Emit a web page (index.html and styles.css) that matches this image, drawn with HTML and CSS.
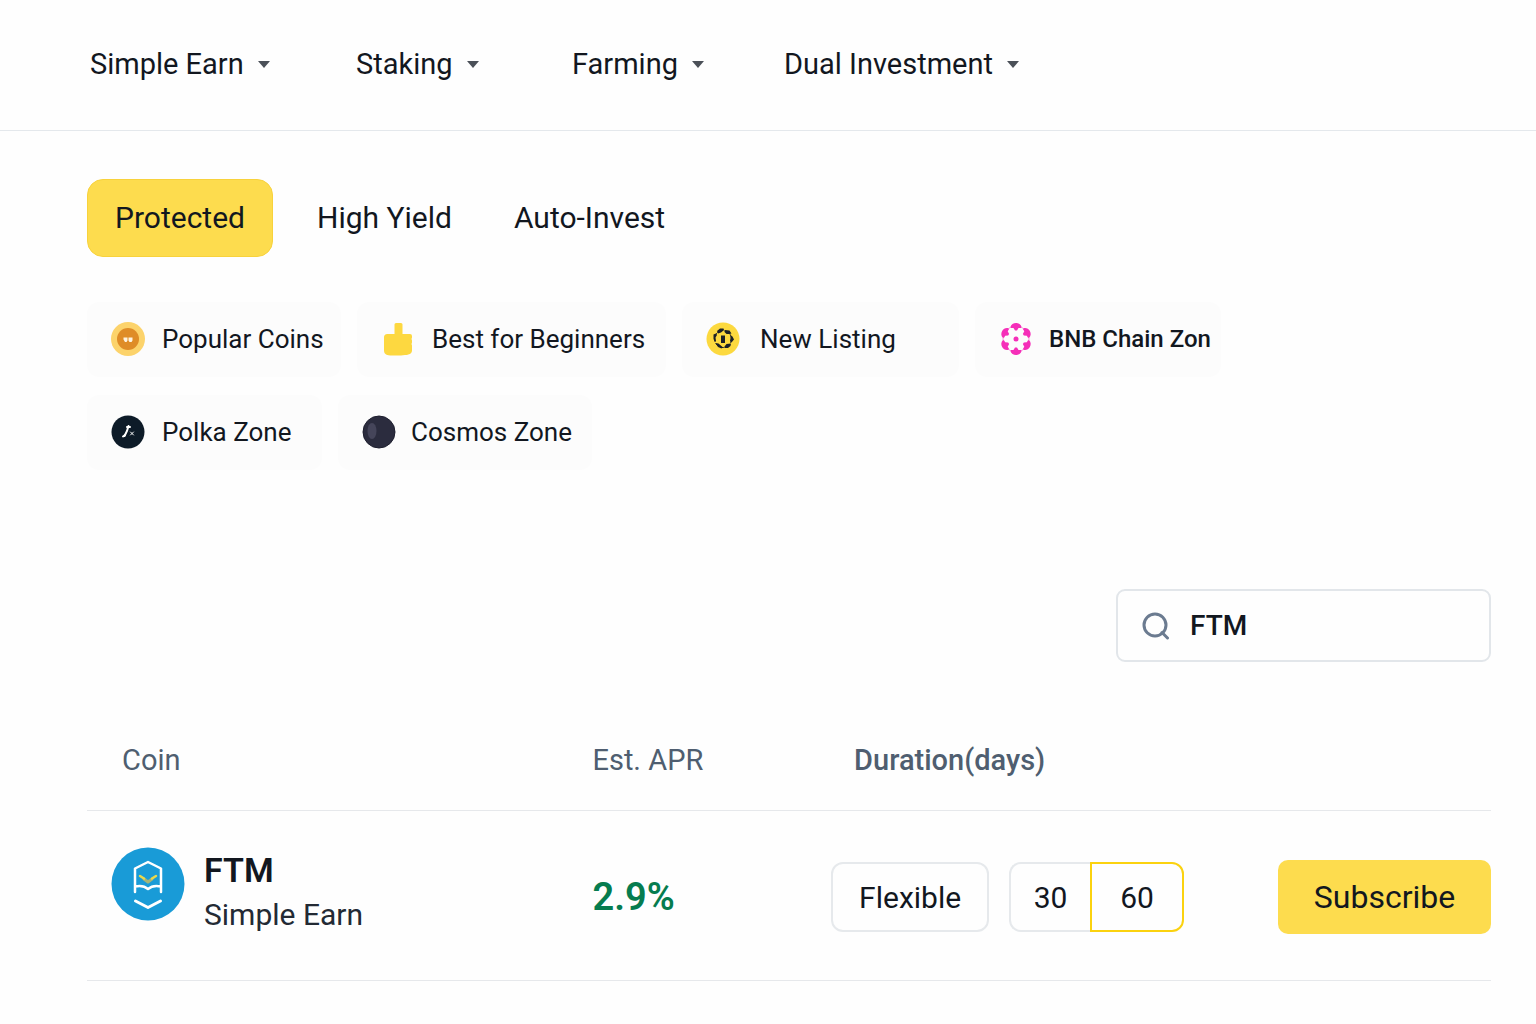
FILE: index.html
```html
<!DOCTYPE html>
<html lang="en">
<head>
<meta charset="utf-8">
<meta name="viewport" content="width=device-width, initial-scale=1">
<title>Simple Earn</title>
<link rel="stylesheet" href="styles.css">
</head>
<body>
<header class="site-header">
  <nav class="main-nav" aria-label="Earn products">
    <button class="nav-item" type="button">Simple Earn<svg class="caret" viewBox="0 0 12 7" aria-hidden="true"><path d="M0 0h12L6 7z"/></svg></button>
    <button class="nav-item" type="button">Staking<svg class="caret" viewBox="0 0 12 7" aria-hidden="true"><path d="M0 0h12L6 7z"/></svg></button>
    <button class="nav-item" type="button">Farming<svg class="caret" viewBox="0 0 12 7" aria-hidden="true"><path d="M0 0h12L6 7z"/></svg></button>
    <button class="nav-item" type="button">Dual Investment<svg class="caret" viewBox="0 0 12 7" aria-hidden="true"><path d="M0 0h12L6 7z"/></svg></button>
  </nav>
</header>

<main class="content">
  <div class="tabs">
    <button class="tab tab-active" type="button" aria-pressed="true">Protected</button>
    <button class="tab" type="button">High Yield</button>
    <button class="tab" type="button">Auto-Invest</button>
  </div>

  <div class="chips">
    <button class="chip chip-popular" type="button">
      <svg class="chip-icon" viewBox="0 0 34 34" aria-hidden="true">
        <circle cx="17" cy="17" r="17" fill="#fcd36b"/>
        <circle cx="17" cy="17" r="11" fill="#df8c27"/>
        <path d="M12.500 15.500h4v3l-1 1.500h-1.500l-1.500-2.500zM17.500 15.500h4v3l-1 1.500h-2l-1-1.500z" fill="#fff3df"/>
      </svg>Popular Coins</button>
    <button class="chip chip-beginners" type="button">
      <svg class="chip-icon" viewBox="0 0 34 34" aria-hidden="true">
        <path d="M13.500 2.500a1.500 1.500 0 0 1 1.500-1.500h5a1.500 1.500 0 0 1 1.500 1.500V12H29a2 2 0 0 1 2 2v1.500l-.5 1.500.5 1.500v2l-.5 1.500.5 1.500v5c0 3-3 4.500-7 4.500l-4 .5h-9c-5 0-8-1-8-5V16c0-3 1-4 4-4h6.500z" fill="#fdd840"/>
      </svg>Best for Beginners</button>
    <button class="chip chip-listing" type="button">
      <svg class="chip-icon" viewBox="0 0 34 34" aria-hidden="true">
        <circle cx="17" cy="17" r="16.500" fill="#fcd93f"/>
        <g fill="#1b2027">
          <path d="M11 9l3-2.500 3.500 0 .5 1.500-3 2.500-3 1zM18.500 8l5 .5 2 3-2 .5-3 0-2-2zM24.500 13.500l2 1 1.500 3-2.500 3-1.500-1.500.5-3zM18.500 24.500l2-2.500 4.500-.5-.5 2.500-2.500 2h-3.500zM9.500 21l3 .5 4 3.500-1 1.500-3.500-1.500zM7.500 12.500l2.500-1 1 1.500-1.500 2.500.5 3.500-1 1-1.500-3z"/>
          <path d="M15 13.500h4v7.500h-4z"/>
        </g>
        <circle cx="17" cy="17" r="8.500" fill="none" stroke="#1b2027" stroke-width="1" stroke-dasharray="4 2"/>
      </svg>New Listing</button>
    <button class="chip chip-bnb" type="button">
      <svg class="chip-icon" viewBox="0 0 34 34" aria-hidden="true">
        <g fill="#f52fb9">
          <path id="petal" d="M11.500 5c.5-2.500 3-4 5.500-4s5 1.500 5.500 4l-.5 1-2.500 0-1.500 2.500h-2l-1.500-2.500-2.500 0z"/>
          <use href="#petal" transform="rotate(60 17 17)"/>
          <use href="#petal" transform="rotate(120 17 17)"/>
          <use href="#petal" transform="rotate(180 17 17)"/>
          <use href="#petal" transform="rotate(240 17 17)"/>
          <use href="#petal" transform="rotate(300 17 17)"/>
          <circle cx="17" cy="17" r="2.500"/>
        </g>
        <circle cx="17" cy="17" r="13" fill="none" stroke="#f52fb9" stroke-width="1" opacity=".5"/>
      </svg>BNB Chain Zon</button>
    <button class="chip chip-polka" type="button">
      <svg class="chip-icon" viewBox="0 0 34 34" aria-hidden="true">
        <circle cx="17" cy="17" r="16.500" fill="#0d1b28"/>
        <g fill="none" stroke="#fff" stroke-linecap="round">
          <path d="M17.500 11l-1.500 5-2.500 5" stroke-width="2"/>
          <path d="M16 12l3 0M12 21.500l2-1.500" stroke-width="2"/>
          <path d="M19.500 17l3 3M22.500 17l-3 3" stroke-width="1"/>
        </g>
      </svg>Polka Zone</button>
    <button class="chip chip-cosmos" type="button">
      <svg class="chip-icon" viewBox="0 0 34 34" aria-hidden="true">
        <circle cx="17" cy="17" r="16" fill="#2b2c3e" stroke="#1d1e2e"/>
        <ellipse cx="10" cy="16" rx="4.500" ry="8" fill="#45455a"/>
      </svg>Cosmos Zone</button>
  </div>

  <label class="search">
    <svg class="search-icon" viewBox="0 0 28 28" aria-hidden="true"><circle cx="13" cy="13" r="11"/><path d="M20 20.500l5.500 5.500"/></svg>
    <input class="search-input" type="text" value="FTM" aria-label="Search coin">
  </label>

  <table class="products">
    <thead>
      <tr>
        <th class="col-coin" scope="col">Coin</th>
        <th class="col-apr" scope="col">Est. APR</th>
        <th class="col-duration" scope="col">Duration(days)</th>
        <td class="col-action"></td>
      </tr>
    </thead>
    <tbody>
      <tr>
        <td class="coin-cell">
          <div class="coin">
            <svg class="coin-logo" viewBox="0 0 74 74" aria-hidden="true">
              <circle cx="37" cy="37" r="36.500" fill="#199bd7"/>
              <g fill="none" stroke="#fff" stroke-width="2.500" stroke-linejoin="round" stroke-linecap="round">
                <path d="M24 45V21.500L37 15l13 6.500V45M24 39.500q8-2 13 2.500q5-4.500 13-2.500"/>
                <path d="M24.500 54L37 60.500 49.500 54" stroke-width="3"/>
              </g>
              <g fill="none" stroke-width="2.500" stroke-linecap="round" stroke-linejoin="round">
                <path d="M33 32l4 3 4-3" stroke="#a3b577" stroke-width="3"/>
                <path d="M29 29l4 2.500M45 29l-4 2.500" stroke="#ead84b"/>
              </g>
            </svg>
            <div class="coin-text">
              <span class="coin-name">FTM</span>
              <span class="coin-product">Simple Earn</span>
            </div>
          </div>
        </td>
        <td class="apr">2.9%</td>
        <td>
          <div class="durations">
            <button class="duration duration-flexible" type="button">Flexible</button>
            <div class="duration-group">
              <button class="duration duration-first" type="button">30</button>
              <button class="duration duration-selected" type="button" aria-pressed="true">60</button>
            </div>
          </div>
        </td>
        <td class="action"><button class="subscribe" type="button">Subscribe</button></td>
      </tr>
    </tbody>
  </table>
</main>
</body>
</html>
```
FILE: styles.css
```css
* {
  box-sizing: border-box;
}

body {
  margin: 0;
  background: #fefefe;
  color: #12171f;
  font-family: Roboto, "Liberation Sans", sans-serif;
}

button {
  border: 0;
  padding: 0;
  background: none;
  color: inherit;
  font: inherit;
  cursor: pointer;
}

.site-header {
  border-bottom: 1px solid #e4e8ec;
  padding: 44px 45px 46px 90px;
}

.main-nav {
  display: grid;
  grid-template-columns: 266px 216px 212px auto;
}

.nav-item {
  display: flex;
  align-items: center;
  gap: 14px;
  font-size: 29px;
  line-height: 40px;
  white-space: nowrap;
}

.caret {
  width: 12px;
  height: 7px;
  fill: #4b5058;
}

.content {
  padding: 48px 45px 42px 87px;
}

.tabs {
  display: flex;
  gap: 44px;
}

.tab {
  font-size: 30px;
  line-height: 40px;
  padding: 18px 0;
}

.tab:last-child {
  margin-left: 18px;
}

.tab-active {
  width: 186px;
  border: 1px solid #f8d23c;
  border-radius: 16px;
  background: #fddc4e;
}

.chips {
  display: flex;
  flex-wrap: wrap;
  gap: 18px 16px;
  max-width: 1150px;
  margin-top: 45px;
}

.chip {
  display: flex;
  align-items: center;
  gap: 17px;
  height: 75px;
  padding: 0 0 2px 24px;
  border-radius: 12px;
  background: #fcfcfc;
  font-size: 26px;
  white-space: nowrap;
}

.chip-icon {
  flex: none;
  width: 34px;
  height: 34px;
}

.chip-popular,
.chip-cosmos {
  width: 254px;
}

.chip-beginners {
  width: 309px;
}

.chip-listing {
  gap: 20px;
  width: 277px;
}

.chip-bnb {
  gap: 16px;
  width: 246px;
  font-size: 24px;
  font-weight: 500;
}

.chip-polka {
  width: 235px;
}

.chip-cosmos {
  gap: 15px;
}

.search {
  display: flex;
  align-items: center;
  gap: 20px;
  width: 375px;
  height: 73px;
  margin: 119px 0 0 auto;
  padding: 0 24px;
  border: 2px solid #e2e6ea;
  border-radius: 9px;
}

.search-icon {
  flex: none;
  width: 28px;
  height: 28px;
  fill: none;
  stroke: #6b7b90;
  stroke-width: 3;
  stroke-linecap: round;
}

.search-input {
  min-width: 0;
  flex: 1;
  border: 0;
  padding: 0;
  outline: 0;
  background: none;
  color: #12171f;
  font: 500 28px Roboto, "Liberation Sans", sans-serif;
}

.products {
  width: 100%;
  margin-top: 48px;
  table-layout: fixed;
  border-collapse: collapse;
}

.products tr {
  border-bottom: 1px solid #e6e8eb;
}

.products th,
.products td {
  padding: 0;
}

.products th {
  height: 100px;
  color: #4f5e70;
  font-size: 29px;
  font-weight: 400;
  text-align: left;
}

.products tbody td {
  height: 170px;
  padding-top: 4px;
}

.products .col-coin {
  width: 36%;
  padding-left: 35px;
}

.col-apr {
  width: 17%;
}

.products .col-duration {
  width: 31%;
  padding-left: 23px;
  font-weight: 500;
}

.products .coin-cell {
  padding-top: 36px;
  vertical-align: top;
}

.coin {
  display: flex;
  align-items: flex-start;
  gap: 19px;
  padding-left: 24px;
}

.coin-logo {
  flex: none;
  width: 74px;
  height: 74px;
}

.coin-text {
  display: flex;
  flex-direction: column;
}

.coin-name {
  font-size: 34px;
  font-weight: 600;
  line-height: 46px;
}

.coin-product {
  color: #232a34;
  font-size: 30px;
  line-height: 44px;
}

.apr {
  color: #067c4f;
  font-size: 38px;
  font-weight: 600;
}

.durations {
  display: flex;
  gap: 20px;
}

.duration {
  height: 70px;
  border: 2px solid #e6e9ec;
  border-radius: 12px;
  font-size: 30px;
}

.duration-flexible {
  width: 158px;
}

.duration-group {
  display: flex;
}

.duration-first {
  width: 81px;
  border-right: 0;
  border-radius: 12px 0 0 12px;
}

.duration-selected {
  width: 94px;
  border-color: #fbd20f;
  border-radius: 0 12px 12px 0;
}

.action {
  text-align: right;
}

.subscribe {
  width: 213px;
  height: 74px;
  border-radius: 10px;
  background: #fddc4e;
  font-size: 32px;
}
```
